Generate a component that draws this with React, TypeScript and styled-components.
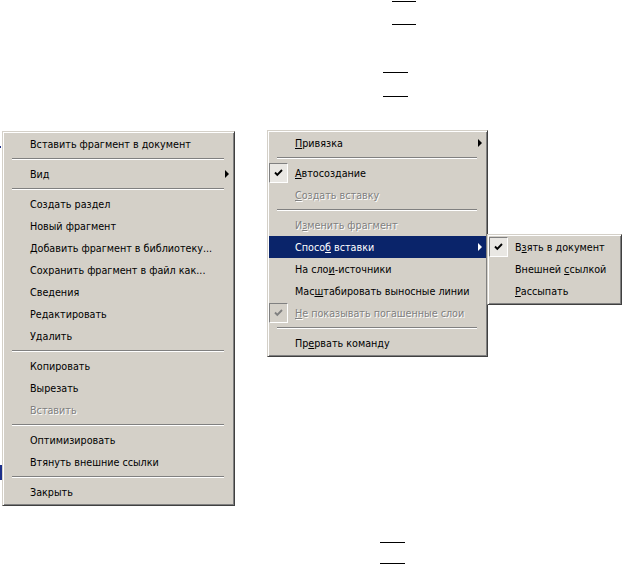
import React from 'react';
import styled, { createGlobalStyle } from 'styled-components';

const Global = createGlobalStyle`
  html, body { margin: 0; padding: 0; background: #fff; }
  body {
    width: 628px; height: 565px; overflow: hidden;
    font-family: "DejaVu Sans Condensed", "DejaVu Sans", sans-serif;
    font-size: 10.7px;
  }
`;

const Canvas = styled.div`
  position: relative;
  width: 628px;
  height: 565px;
`;

const BarPair = styled.div<{ x: number; y: number; w: number; gap: number }>`
  position: absolute;
  left: ${p => p.x}px;
  top: ${p => p.y}px;
  width: ${p => p.w}px;
  display: flex;
  flex-direction: column;
  gap: ${p => p.gap}px;
`;

const Bar = styled.div`
  height: 1px;
  background: #000;
`;

const Speck = styled.div<{ x: number; y: number; w: number; h: number }>`
  position: absolute;
  left: ${p => p.x}px;
  top: ${p => p.y}px;
  width: ${p => p.w}px;
  height: ${p => p.h}px;
  background: #1c2f8a;
`;

const Panel = styled.div<{ x?: number; y?: number; w: number; $sub?: boolean }>`
  position: absolute;
  ${p =>
    p.$sub
      ? 'left: calc(100% + 1px); top: -2px;'
      : `left: ${p.x}px; top: ${p.y}px;`}
  width: ${p => p.w}px;
  box-sizing: border-box;
  background: #d4d0c8;
  padding: 1px 1px 2px;
  border: 1px solid;
  border-color: #d4d0c8 #404040 #404040 #d4d0c8;
  box-shadow: inset 1px 1px #ffffff, inset -1px -1px #808080;
  display: flex;
  flex-direction: column;
  color: #000;
  text-shadow: none;
  z-index: 2;
`;

const Row = styled.div<{ $active?: boolean; $disabled?: boolean }>`
  position: relative;
  height: 22px;
  display: flex;
  align-items: center;
  padding-right: 3px;
  white-space: nowrap;
  background: ${p => (p.$active ? '#0a246a' : 'transparent')};
  color: ${p => (p.$active ? '#ffffff' : p.$disabled ? '#808080' : '#000000')};
  text-shadow: ${p => (p.$disabled ? '1px 1px 0 #ffffff' : 'none')};
`;

const Gutter = styled.div`
  width: 26px;
  height: 22px;
  flex: none;
  display: flex;
  align-items: center;
`;

const CheckBox = styled.div<{ $disabled?: boolean }>`
  width: 19px;
  height: 20px;
  box-sizing: border-box;
  border: 1px solid;
  border-color: #808080 #ffffff #ffffff #808080;
  background: ${p => (p.$disabled ? '#d4d0c8' : '#e9e7e3')};
  display: flex;
  align-items: center;
  justify-content: center;
`;

const Label = styled.span`
  flex: 1;
  padding-top: 1px;
  u { text-decoration: underline; text-underline-offset: 1px; }
`;

const Arrow = styled.span<{ $active?: boolean }>`
  width: 0;
  height: 0;
  border-top: 4px solid transparent;
  border-bottom: 4px solid transparent;
  border-left: 4px solid ${p => (p.$active ? '#ffffff' : '#000000')};
  margin-left: 8px;
  margin-right: 1px;
`;

const Sep = styled.div`
  padding: 3px 9px 3px 8px;
  &::after {
    content: '';
    display: block;
    height: 0;
    border-top: 1px solid #808080;
    border-bottom: 1px solid #ffffff;
  }
`;

type Entry =
  | { sep: true }
  | {
      sep?: false;
      label: string;
      sub?: Entry[] | true;
      disabled?: boolean;
      checked?: boolean;
      active?: boolean;
    };

const renderLabel = (s: string) => {
  const i = s.indexOf('&');
  if (i < 0) return s;
  return (
    <>
      {s.slice(0, i)}
      <u>{s.charAt(i + 1)}</u>
      {s.slice(i + 2)}
    </>
  );
};

const Check = ({ color }: { color: string }) => (
  <svg width="9" height="8" viewBox="0 0 9 8">
    <polyline points="1,3.5 3.3,5.8 8,1" fill="none" stroke={color} strokeWidth="1.9" />
  </svg>
);

const Items = ({ items }: { items: Entry[] }) => (
  <>
    {items.map((it, i) =>
      it.sep ? (
        <Sep key={i} />
      ) : (
        <Row key={i} $active={it.active} $disabled={it.disabled}>
          <Gutter>
            {it.checked && (
              <CheckBox $disabled={it.disabled}>
                <Check color={it.disabled ? '#808080' : '#000'} />
              </CheckBox>
            )}
          </Gutter>
          <Label>{renderLabel(it.label)}</Label>
          {it.sub && <Arrow $active={it.active} />}
          {Array.isArray(it.sub) && (
            <Panel $sub w={135}>
              <Items items={it.sub} />
            </Panel>
          )}
        </Row>
      )
    )}
  </>
);

const leftMenu: Entry[] = [
  { label: 'Вставить фрагмент в документ' },
  { sep: true },
  { label: 'Вид', sub: true },
  { sep: true },
  { label: 'Создать раздел' },
  { label: 'Новый фрагмент' },
  { label: 'Добавить фрагмент в библиотеку...' },
  { label: 'Сохранить фрагмент в файл как...' },
  { label: 'Сведения' },
  { label: 'Редактировать' },
  { label: 'Удалить' },
  { sep: true },
  { label: 'Копировать' },
  { label: 'Вырезать' },
  { label: 'Вставить', disabled: true },
  { sep: true },
  { label: 'Оптимизировать' },
  { label: 'Втянуть внешние ссылки' },
  { sep: true },
  { label: 'Закрыть' },
];

const subMenu: Entry[] = [
  { label: 'В&зять в документ', checked: true },
  { label: 'Внешней &ссылкой' },
  { label: '&Рассыпать' },
];

const rightMenu: Entry[] = [
  { label: '&Привязка', sub: true },
  { sep: true },
  { label: '&Автосоздание', checked: true },
  { label: '&Создать вставку', disabled: true },
  { sep: true },
  { label: 'И&зменить фрагмент', disabled: true },
  { label: 'Спосо&б вставки', sub: subMenu, active: true },
  { label: 'На сло&и-источники' },
  { label: 'Мас&штабировать выносные линии' },
  { label: '&Не показывать погашенные слои', disabled: true, checked: true },
  { sep: true },
  { label: 'Пр&ервать команду' },
];

export default function App() {
  return (
    <>
      <Global />
      <Canvas>
        <BarPair x={392} y={1} w={24} gap={22}>
          <Bar />
          <Bar />
        </BarPair>
        <BarPair x={383} y={72} w={25} gap={23}>
          <Bar />
          <Bar />
        </BarPair>
        <BarPair x={380} y={542} w={25} gap={20}>
          <Bar />
          <Bar />
        </BarPair>
        <Speck x={0} y={146} w={1} h={2} />
        <Speck x={0} y={465} w={2} h={15} />
        <Panel x={2} y={131} w={233}>
          <Items items={leftMenu} />
        </Panel>
        <Panel x={267} y={130} w={221}>
          <Items items={rightMenu} />
        </Panel>
      </Canvas>
    </>
  );
}
